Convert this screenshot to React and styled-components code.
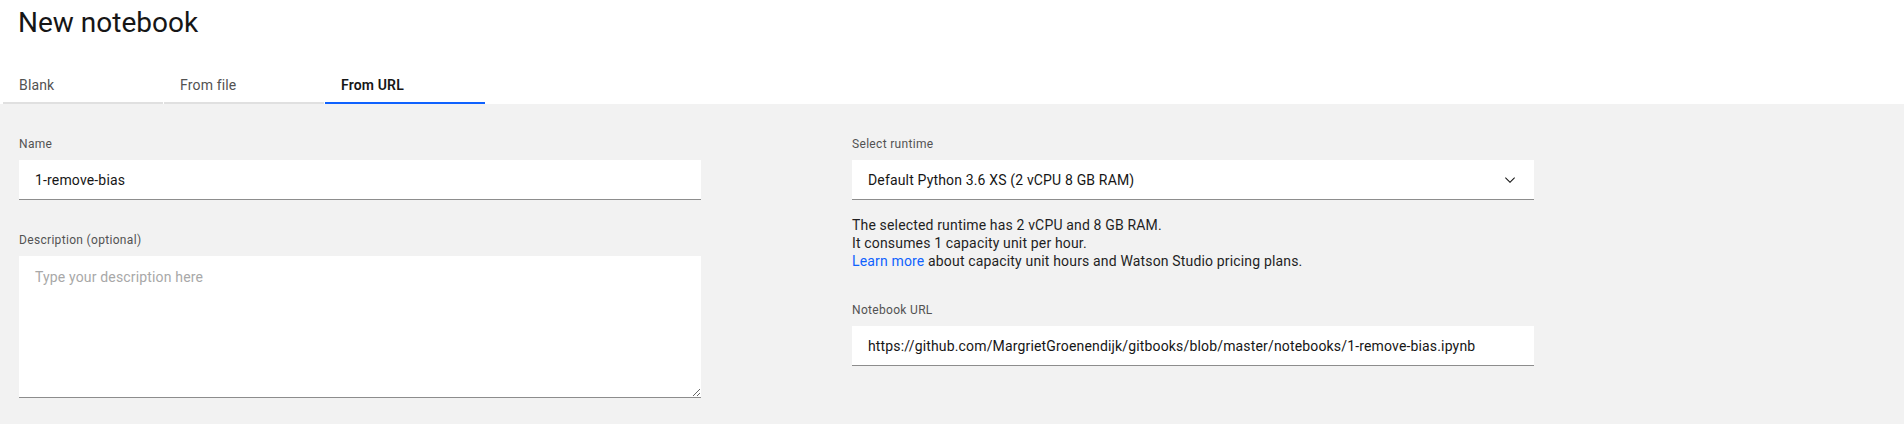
import React, { useState } from 'react';
import styled, { createGlobalStyle } from 'styled-components';

const GlobalStyle = createGlobalStyle`
    html, body {
        margin: 0;
        padding: 0;
        background: #f2f2f2;
    }
    body {
        font-family: Roboto, "Liberation Sans", sans-serif;
        color: #161616;
        -webkit-font-smoothing: antialiased;
    }
    * {
        box-sizing: border-box;
    }
`;

const tabs = ['Blank', 'From file', 'From URL'];

function ChevronDown() {
    return (
        <svg width="16" height="16" viewBox="0 0 16 16" fill="#161616">
            <path d="M8 11L3 6 3.7 5.3 8 9.6 12.3 5.3 13 6z" />
        </svg>
    );
}

function App() {
    const [activeTab, setActiveTab] = useState(2);
    const [name, setName] = useState('1-remove-bias');
    const [description, setDescription] = useState('');
    const [url, setUrl] = useState(
        'https://github.com/MargrietGroenendijk/gitbooks/blob/master/notebooks/1-remove-bias.ipynb'
    );

    return (
        <Page>
            <GlobalStyle />
            <Header>
                <Title>New notebook</Title>
                <TabList>
                    {tabs.map((tab, i) => (
                        <Tab key={tab} $active={i === activeTab} onClick={() => setActiveTab(i)}>
                            {tab}
                        </Tab>
                    ))}
                </TabList>
            </Header>
            <Body>
                <Column>
                    <FormItem>
                        <Label htmlFor="nb-name">Name</Label>
                        <TextInput id="nb-name" value={name} onChange={(e) => setName(e.target.value)} />
                    </FormItem>
                    <FormItem>
                        <Label htmlFor="nb-desc">Description (optional)</Label>
                        <TextArea
                            id="nb-desc"
                            placeholder="Type your description here"
                            value={description}
                            onChange={(e) => setDescription(e.target.value)}
                        />
                    </FormItem>
                </Column>
                <Column>
                    <FormItem>
                        <Label htmlFor="nb-runtime">Select runtime</Label>
                        <SelectWrapper>
                            <Select id="nb-runtime" defaultValue="xs">
                                <option value="xs">Default Python 3.6 XS (2 vCPU 8 GB RAM)</option>
                                <option value="s">Default Python 3.6 S (4 vCPU 16 GB RAM)</option>
                            </Select>
                            <SelectIcon>
                                <ChevronDown />
                            </SelectIcon>
                        </SelectWrapper>
                        <RuntimeInfo>
                            The selected runtime has 2 vCPU and 8 GB RAM.
                            <br />
                            It consumes 1 capacity unit per hour.
                            <br />
                            <Link href="#">Learn more</Link> about capacity unit hours and Watson Studio pricing plans.
                        </RuntimeInfo>
                    </FormItem>
                    <FormItem>
                        <Label htmlFor="nb-url">Notebook URL</Label>
                        <TextInput id="nb-url" value={url} onChange={(e) => setUrl(e.target.value)} />
                    </FormItem>
                </Column>
            </Body>
        </Page>
    );
}

export default App;

const Page = styled.div`
    min-height: 100vh;
    display: flex;
    flex-direction: column;
`;

const Header = styled.div`
    background-color: #fff;
`;

const Title = styled.h1`
    margin: 0;
    padding: 5px 0 0 18px;
    font-size: 28px;
    font-weight: 400;
    line-height: 36px;
    color: #161616;
`;

const TabList = styled.div`
    display: flex;
    gap: 1px;
    margin-top: 23px;
    padding-left: 3px;
`;

const Tab = styled.button`
    width: 160px;
    padding: 12px 16px 8px;
    border: none;
    border-bottom: 2px solid ${(p) => (p.$active ? '#0f62fe' : '#e0e0e0')};
    background: none;
    text-align: left;
    font-family: inherit;
    font-size: 14px;
    line-height: 18px;
    letter-spacing: 0.16px;
    font-weight: ${(p) => (p.$active ? 600 : 400)};
    color: ${(p) => (p.$active ? '#161616' : '#525252')};
    cursor: pointer;
`;

const Body = styled.div`
    flex: 1;
    background-color: #f2f2f2;
    display: grid;
    grid-template-columns: 682px 682px;
    column-gap: 151px;
    align-items: start;
    padding: 32px 19px;
`;

const Column = styled.div`
    display: flex;
    flex-direction: column;
    gap: 32px;
`;

const FormItem = styled.div`
    display: flex;
    flex-direction: column;
`;

const Label = styled.label`
    display: block;
    margin-bottom: 8px;
    font-size: 12px;
    line-height: 16px;
    letter-spacing: 0.32px;
    color: #525252;
`;

const fieldBase = `
    width: 100%;
    border: none;
    border-bottom: 1px solid #8d8d8d;
    border-radius: 0;
    background-color: #fff;
    font-family: inherit;
    font-size: 14px;
    letter-spacing: 0.16px;
    color: #161616;
    outline: none;
`;

const TextInput = styled.input`
    ${fieldBase}
    height: 40px;
    padding: 0 16px;
`;

const TextArea = styled.textarea`
    ${fieldBase}
    height: 142px;
    padding: 11px 16px;
    line-height: 20px;

    &::placeholder {
        color: #a8a8a8;
    }
`;

const SelectWrapper = styled.div`
    position: relative;
`;

const Select = styled.select`
    ${fieldBase}
    height: 40px;
    padding: 0 48px 0 16px;
    appearance: none;
    cursor: pointer;
`;

const SelectIcon = styled.span`
    position: absolute;
    top: 12px;
    right: 16px;
    display: flex;
    pointer-events: none;
`;

const RuntimeInfo = styled.p`
    margin: 16px 0 0;
    font-size: 14px;
    line-height: 18px;
    letter-spacing: 0.16px;
    color: #1f1f1f;
`;

const Link = styled.a`
    color: #0f62fe;
    text-decoration: none;
`;
